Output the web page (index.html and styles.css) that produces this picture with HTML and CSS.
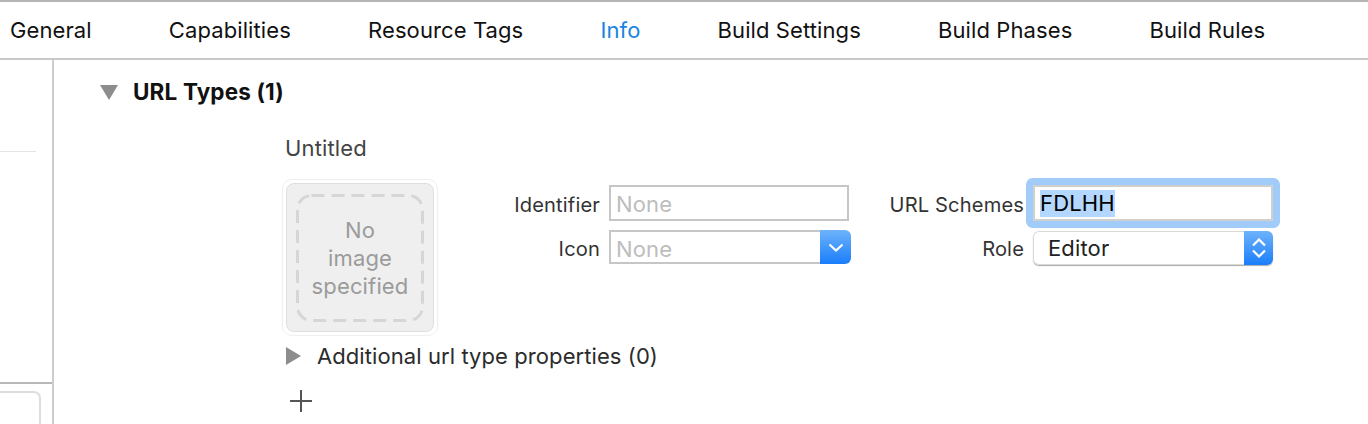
FILE: index.html
```html
<!DOCTYPE html>
<html lang="en">
<head>
	<meta charset="UTF-8">
	<title>URL Types</title>
	<link rel="stylesheet" href="styles.css">
</head>
<body>
	<!-- tabs -->
	<div class="tabs">
		<span>General</span>
		<span>Capabilities</span>
		<span>Resource Tags</span>
		<span class="current">Info</span>
		<span>Build Settings</span>
		<span>Build Phases</span>
		<span>Build Rules</span>
	</div>
	<div class="page">
		<!-- sidebar -->
		<div class="side">
			<div class="side-line"></div>
			<div class="side-rule"></div>
			<div class="side-box"></div>
		</div>
		<div class="main">
			<div class="head">
				<svg class="tri-down" width="18" height="15" viewBox="0 0 18 15"><path d="M0 0H18L9 15Z"/></svg>
				<b>URL Types (1)</b>
			</div>
			<div class="item-title">Untitled</div>
			<div class="item">
				<div class="well">
					<div class="well-in">
						<svg class="dash" width="128" height="128" viewBox="0 0 128 128"><rect x="1.5" y="1.5" width="125" height="125" rx="14" ry="14"/></svg>
						<div class="well-text">No<br>image<br>specified</div>
					</div>
				</div>
				<div class="form">
					<label>Identifier</label>
					<div class="input ph">None</div>
					<label>URL Schemes</label>
					<div class="input focus"><span class="sel">FDLHH</span></div>
					<label>Icon</label>
					<div class="combo">
						<div class="combo-text ph">None</div>
						<div class="btn">
							<svg width="16" height="9" viewBox="0 0 16 9"><path d="M1.5 1.500L8 7.500L14.500 1.500"/></svg>
						</div>
					</div>
					<label>Role</label>
					<div class="popup">
						<div class="popup-text">Editor</div>
						<div class="btn btn-pop">
							<svg width="14" height="24" viewBox="0 0 14 24"><path d="M1 9.500L7 3.500L13 9.500M1 14.500L7 20.500L13 14.500"/></svg>
						</div>
					</div>
				</div>
			</div>
			<div class="more">
				<svg class="tri-right" width="15" height="18" viewBox="0 0 15 18"><path d="M0 0V18L15 9Z"/></svg>
				<span>Additional url type properties (0)</span>
			</div>
			<svg class="plus" width="22" height="22" viewBox="0 0 22 22"><path d="M0 11H22M11 0V22"/></svg>
		</div>
	</div>
</body>
</html>
```

FILE: styles.css
```css
*{box-sizing: border-box;}
html,body{margin: 0;padding: 0;height: 100%;overflow: hidden;}
body{background: #fff;font-family: Inter,"Liberation Sans",sans-serif;font-size: 22px;letter-spacing: .15px;color: #2b2b2b;}

.tabs{height: 60px;display: flex;align-items: center;gap: 77.1px;padding: 0 0 0 10px;border-top: 2px solid #b4b4b4;border-bottom: 2px solid #c9c9c9;color: #111;white-space: nowrap;letter-spacing: .1px;}
.tabs .current{color: #1b84e0;}

.page{display: flex;height: 364px;}
.side{width: 54px;flex: none;border-right: 2px solid #cdcdcd;padding-top: 91px;}
.side-line{width: 36px;height: 1px;background: #e4e4e4;}
.side-rule{height: 2px;background: #b9b9b9;margin-top: 230px;}
.side-box{width: 41px;height: 33px;margin-top: 7px;border: 2px solid #ddd;border-left: 0;border-bottom: 0;border-radius: 0 7px 0 0;}

.main{flex: 1;padding: 22px 0 0 46px;}
.head{display: flex;align-items: center;height: 20px;}
.head b{margin: -1px 0 0 15px;font-size: 22.5px;font-weight: 700;color: #111;}
.tri-down path,.tri-right path{fill: #8d8d8d;}

.item-title{margin: 32px 0 0 185px;height: 28px;line-height: 28px;color: #444;}

.item{display: flex;margin: 17px 0 0 182px;}
.well{width: 156px;height: 157px;flex: none;padding: 3px;border: 1px solid #efefef;border-radius: 10px;}
.well-in{position: relative;height: 149px;border: 1px solid #dfdfdf;border-radius: 8px;background: #efefef;display: flex;align-items: center;justify-content: center;}
.dash{position: absolute;left: 9px;top: 10px;}
.dash rect{fill: none;stroke: #d6d6d6;stroke-width: 3;stroke-dasharray: 13 7;}
.well-text{text-align: center;font-size: 22px;line-height: 28px;color: #9b9b9b;}

.form{display: grid;grid-template-columns: 171px 242px 182px 240px;grid-template-rows: 36px 35px;row-gap: 9px;margin-top: 6px;}
.form label{display: flex;align-items: center;justify-content: flex-end;padding: 3px 9px 0 0;font-size: 20.1px;color: #333;}

.input{width: 240px;height: 36px;border: 2px solid #c6c6c6;padding-left: 5px;line-height: 34px;}
.ph{color: #bdbdbd;}
.focus{border-color: #cfcfcf;box-shadow: 0 0 0 7px #a1cbf9;border-radius: 2px;color: #000;}
.sel{background: #b3d7ff;display: inline-block;height: 27px;line-height: 27px;margin-top: 3px;vertical-align: top;}

.combo{display: flex;height: 34px;width: 242px;}
.combo-text{flex: 1;border: 2px solid #c6c6c6;border-right: 0;padding-left: 5px;line-height: 35px;}
.btn{width: 31px;flex: none;background: linear-gradient(#6db3fb,#1a7efb);border-radius: 0 6px 6px 0;display: flex;align-items: center;justify-content: center;}
.btn path{fill: none;stroke: #fff;stroke-width: 2.2;}

.popup{display: flex;width: 240px;height: 34px;margin-top: 1px;border-radius: 6px;box-shadow: inset 0 0 0 1px #d9d9d9,0 1px 1px #aaa;}
.popup-text{flex: 1;padding-left: 15px;line-height: 34px;color: #222;}
.btn-pop{width: 29px;}

.more{display: flex;align-items: center;margin: 11px 0 0 186px;height: 18px;letter-spacing: .08px;}
.more span{margin-left: 16px;}
.plus{display: block;margin: 25px 0 0 190px;}
.plus path{stroke: #555;stroke-width: 2;fill: none;}
```
